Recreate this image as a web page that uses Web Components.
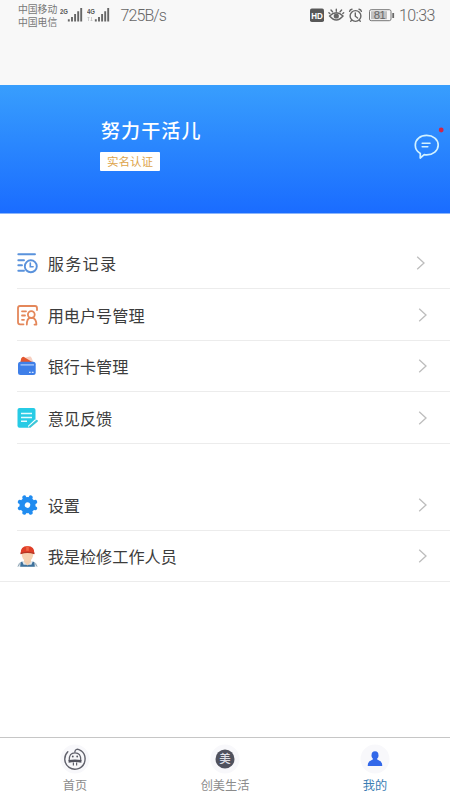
<!DOCTYPE html>
<html lang="zh-CN">
<head>
<meta charset="utf-8">
<title>我的</title>
<style>
html,body{margin:0;height:100%}
body{font-family:"Noto Sans CJK SC",sans-serif;background:#fff;overflow:hidden}
</style>
</head>
<body>
<profile-page></profile-page>
<script>
const define = (name, html, setup) => {
  const t = document.createElement('template');
  t.innerHTML = html;
  customElements.define(name, class extends HTMLElement {
    constructor() {
      super();
      this.attachShadow({mode: 'open'}).appendChild(t.content.cloneNode(true));
    }
    connectedCallback() { if (setup) setup(this, this.shadowRoot); }
  });
};

const icons = {
  record: `<g fill="none" stroke="#5a92dc" stroke-width="1.9" stroke-linecap="round"><path d="M1.3 1.3H18M1.3 7.2H7M1.3 12.2H5M1.3 17.7H7"/><circle cx="13.8" cy="13.3" r="6"/><path d="M13.3 10.1v3.7h2.8" stroke-width="1.6"/></g>`,
  account: `<g fill="none" stroke="#e4875a" stroke-width="1.8" stroke-linecap="round" stroke-linejoin="round"><path d="M6.5 19.3H3Q1 19.3 1 17.3V3Q1 1 3 1H18Q20 1 20 3V5"/><path d="M5 6.3H9M5 10.5H8M5 14.8H7"/><circle cx="14.3" cy="9.6" r="3.4"/><path d="M9.8 19.6C9.8 15.8 11 13.5 12.8 12.8M15.8 12.8C18 13.6 19.4 15.8 19.4 19.6H17.5"/></g>`,
  card: `<path d="M7 2L12.5 .6Q14 .3 14.6 2L16.5 6.5H7Z" fill="#f7cfc0"/><path d="M3 7.5L4.2 2.4Q5 .6 7 .9L16 6.5V7.5Z" fill="#e3572f"/><rect x="1" y="5.8" width="17.7" height="13.2" rx="2.5" fill="#3f7fe8"/><path d="M3.5 8.9H17" stroke="#b4d2ff" stroke-width="1.2"/><path d="M12 16.4H13.7M14.8 16.4H16.6" stroke="#d5e5ff" stroke-width="1.1"/>`,
  feedback: `<path d="M2.5 0H16.5Q18.5 0 18.5 2V12L11.5 19.8H2.5Q.5 19.8 .5 17.8V2Q.5 0 2.5 0Z" fill="#27cbe5"/><path d="M4 5.5H15M4 9.4H15M4 13.3H10" stroke="#e5fcff" stroke-width="1.5"/><path d="M12.4 19.6L19.6 12.8" stroke="#fff" stroke-width="4.4"/><path d="M13 18.8L19.8 12.9" stroke="#3cc6d8" stroke-width="2.1" stroke-linecap="round"/>`,
  settings: `<g transform="translate(10.5 10.1) rotate(22.5)"><path d="M0-8.3V8.3M-8.3 0H8.3M-5.87-5.87L5.87 5.87M-5.87 5.87L5.87-5.87" stroke="#218cf0" stroke-width="4" stroke-linecap="round"/><circle r="8" fill="#218cf0"/><circle r="2.7" fill="#fff"/></g>`,
  worker: `<path d="M.5 20.8Q.5 16.5 5 15.6L8 14.7H13L16 15.6Q20.5 16.5 20.5 20.8Z" fill="#dfe6e9"/><path d="M3.6 16.2L5.2 15.6 6.6 18.8H14.4L15.8 15.6 17.4 16.2 17.8 20.8H3.2Z" fill="#3e719c"/><path d="M7 12H14V16L10.5 19.6 7 16Z" fill="#f1cdae"/><path d="M4.6 6.5H16.4Q16.5 14.8 10.5 15Q4.5 14.8 4.6 6.5Z" fill="#f6d1b0"/><path d="M3.7 7.4Q3.2 .2 10.5 0Q17.8 .2 17.3 7.4Q10.5 5 3.7 7.4Z" fill="#df3e27"/><path d="M3.5 7.5Q10.5 5.3 17.5 7.5" fill="none" stroke="#b63625" stroke-width="1.4"/><path d="M9.2 .3H11.8V4.8H9.2Z" fill="#ef6546"/><path d="M1 20.5L2.8 17.3M20 20.5L18.2 17.3" stroke="#8fa5b7" stroke-width="1"/>`
};

define('signal-bars', `<style>
:host{display:flex;width:23px;height:17px}svg{display:block}
text{font:bold 7.4px "Liberation Sans",sans-serif}
</style><svg width="23" height="17"><text x="0" y="7" fill="#555" textLength="8" lengthAdjust="spacingAndGlyphs"></text><path d="M8.8 12.3V14.5M12 10V14.5M15.1 7V14.5M18.2 4.2V14.5M21.2 1V14.5" stroke="#666" stroke-width="1.9"/><path class="net" d="M1.5 10v4M.5 11l1-1 1 1M4.5 10v4M3.5 13l1 1 1-1" stroke="#bbb" stroke-width=".7" fill="none"/></svg>`,
(el, r) => {
  r.querySelector('text').textContent = el.getAttribute('label');
  if (!el.hasAttribute('data')) r.querySelector('.net').remove();
});

define('status-bar', `<style>
:host{display:flex;box-sizing:border-box;height:85px;padding:0 14px 0 18px;background:#f8f8f8;color:#666;align-items:flex-start}
.carrier{font-size:9.8px;line-height:13.3px;padding-top:2.5px;width:42px;white-space:nowrap;color:#777}
.signals{display:flex;gap:4px;padding-top:7px}
.rate,.time{font:300 16px/20px "Roboto","Liberation Sans",sans-serif;padding-top:5.5px;white-space:nowrap;letter-spacing:-.9px}
.rate{margin-left:10.5px}
.icons{margin-left:auto;padding-top:8px}svg{display:block}
.time{margin-left:4.5px;letter-spacing:-.65px;width:37px}
text{font-family:"Liberation Sans",sans-serif}
</style>
<div class="carrier">中国移动<br>中国电信</div>
<div class="signals"><signal-bars label="2G"></signal-bars><signal-bars label="4G" data></signal-bars></div>
<div class="rate">725B/s</div>
<svg class="icons" width="85" height="15" viewBox="0 0 85 15">
<rect x="0" y=".6" width="14" height="13.4" rx="1.8" fill="#585858"/><text x="1.2" y="10.8" font-size="9.6" font-weight="bold" fill="#fff" textLength="11.6" lengthAdjust="spacingAndGlyphs">HD</text>
<g fill="none" stroke="#666" stroke-width="1.4" stroke-linecap="round"><path d="M19.6 8Q26.3 1.5 33 8Q26.3 15.9 19.6 8Z"/><path d="M26.3 3.2V1.2M22.5 3.7L21 2M30.1 3.7L31.6 2M19.8 5.5L18.9 4.7M32.8 5.5L33.7 4.7"/><circle cx="45.5" cy="8" r="5.4"/><path d="M45.3 5V8.2L47.6 10M39.6 3.3Q40 1.5 42 1.2M51.4 3.3Q51 1.5 49 1.2M41.6 12.1L40.7 13.3M49.4 12.1L50.3 13.3"/></g><circle cx="26.3" cy="8" r="2.6" fill="#666"/>
<rect x="59.5" y="1.7" width="21.5" height="11" rx="1.7" fill="none" stroke="#777"/><rect x="61" y="3.2" width="16" height="8" fill="#c2c2c2"/><path d="M83.2 5V10" stroke="#666" stroke-width="1.8"/><text x="63.8" y="11.3" font-size="11.3" fill="#666" textLength="12">81</text>
</svg>
<div class="time">10:33</div>`);

define('message-icon', `<style>:host{display:block;width:32px;height:38px}svg{display:block}</style>
<svg width="32" height="38" viewBox="0 0 32 38"><path d="M7.3 28.5Q2.3 25.5 2.3 20.2C2.3 14.3 7.3 10.4 13.7 10.4S25.2 14.3 25.2 20.1S20 29.9 13.7 29.9Q12.3 29.9 11.2 29.6L7.2 33Z" fill="none" stroke="#d2f2ff" stroke-width="1.7" stroke-linejoin="round"/><path d="M9.2 18.2H17M9.2 21.8H14.8" stroke="#d2f2ff" stroke-width="1.6" stroke-linecap="round"/><circle cx="28.2" cy="5" r="2.4" fill="#d02648"/></svg>`);

define('account-banner', `<style>
:host{display:flex;box-sizing:border-box;height:129px;background:linear-gradient(#389efd,#1a6cff);padding:31.5px 5px 0 100px;justify-content:space-between;border-bottom:1px solid #8bb5fa}
.name{color:#fff;font-size:19px;font-weight:500;line-height:26px;letter-spacing:1.1px;padding-left:1px}
.badge{margin-top:9.5px;width:60px;height:19px;line-height:19px;background:#fff;color:#dda44a;font-size:11.5px;text-align:center;border-radius:1px}
message-icon{margin-top:8.5px}
</style>
<div><div class="name"><slot></slot></div><div class="badge"><slot name="badge"></slot></div></div><message-icon></message-icon>`);

define('menu-row', `<style>
:host{display:flex;box-sizing:border-box;height:51.6px;margin-left:17px;padding:1px 21.5px 0 0;border-bottom:1px solid #ececec;align-items:center;color:#3c3c3c;font-size:16.15px}
:host([wide]){margin-left:0;padding-left:17px}
:host([spaced]) .label{letter-spacing:1.3px}
:host([spaced]){padding-right:23px}
.icon{width:21px;height:21px;margin-right:9.7px;flex:none;margin-top:1px}
.label{flex:1;line-height:24px}
svg{display:block}
</style><svg class="icon" viewBox="0 0 21 21"></svg><div class="label"><slot></slot></div>
<svg width="12" height="16" viewBox="0 0 12 16"><path d="M2.2 1.8L9 8L2.2 14.2" fill="none" stroke="#bdbdbd" stroke-width="1.3"/></svg>`,
(el, r) => r.querySelector('.icon').innerHTML = icons[el.getAttribute('icon')]);

define('menu-group', `<style>:host{display:flex;flex-direction:column}</style><slot></slot>`);

const tabIcons = {
  home: `<g fill="none" stroke="#60616b" stroke-width="1.4" stroke-linecap="round"><path d="M8.8 8.8A10.2 10.2 0 1 0 25.2 20.4Q28 12.6 22.2 7.8Q16.5 4.3 15.8 9"/></g><path d="M10.2 17.5Q10 9.8 16 9.8T21.8 17.5Z" fill="#f6f6f8" stroke="#60616b" stroke-width="1.2"/><path d="M9.6 17Q16 15.8 22.4 17V19.7Q16 18.5 9.6 19.7Z" fill="#51525d"/><path d="M14.4 19.5V22.6M17.6 19.5V22.6" stroke="#60616b" stroke-width="1.2"/><circle cx="13.8" cy="13.5" r=".9" fill="#555661"/><circle cx="18.2" cy="13.5" r=".9" fill="#555661"/>`,
  life: `<circle cx="16" cy="16" r="9.5" fill="#50525e"/><text x="16" y="20.2" text-anchor="middle" font-size="11.5" font-weight="500" fill="#dddde4" font-family="Noto Sans CJK SC, sans-serif">美</text>`,
  mine: `<ellipse cx="16" cy="12.2" rx="3.5" ry="3.9" fill="#3268e9"/><path d="M8.8 23Q8.4 18.4 12.8 17L14 16.3V14H18V16.3L19.2 17Q23.6 18.4 23.2 23Z" fill="#3268e9"/>`
};
define('tab-item', `<style>
:host{display:flex;flex:1;flex-direction:column;align-items:center;color:#8b8b8b;font-size:12.2px;line-height:18px;padding-top:5px}
:host([active]){color:#3b7db3}svg{display:block;margin-bottom:1px}
</style><svg width="32" height="32" viewBox="0 0 32 32"><circle cx="16" cy="16" r="14.5" fill="#f8f8fb"/><g></g></svg><span><slot></slot></span>`,
(el, r) => r.querySelector('g').innerHTML = tabIcons[el.getAttribute('icon')]);
define('tab-bar', `<style>:host{display:flex;box-sizing:border-box;height:63px;border-top:1px solid #c6c6c6;background:#fff}</style><slot></slot>`);

define('profile-page', `<style>
:host{display:flex;flex-direction:column;width:450px;height:800px}
menu-group{margin-top:23.4px}
menu-group+menu-group{margin-top:35.2px}
tab-bar{margin-top:auto}
</style>
<status-bar></status-bar>
<account-banner>努力干活儿<span slot="badge">实名认证</span></account-banner>
<menu-group>
<menu-row icon="record" spaced>服务记录</menu-row>
<menu-row icon="account">用电户号管理</menu-row>
<menu-row icon="card">银行卡管理</menu-row>
<menu-row icon="feedback">意见反馈</menu-row>
</menu-group>
<menu-group>
<menu-row icon="settings">设置</menu-row>
<menu-row icon="worker" wide>我是检修工作人员</menu-row>
</menu-group>
<tab-bar>
<tab-item icon="home">首页</tab-item>
<tab-item icon="life">创美生活</tab-item>
<tab-item icon="mine" active>我的</tab-item>
</tab-bar>`);
</script>
</body>
</html>
